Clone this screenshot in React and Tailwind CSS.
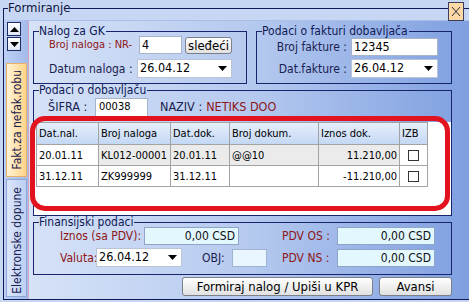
import React from 'react';

function Arrow({ up }) {
  return (
    <svg width="9" height="5" viewBox="0 0 9 5">
      <path d={up ? 'M0 5h9L4.5 0z' : 'M0 0h9L4.5 5z'} fill="#000" />
    </svg>
  );
}

function Group({ title, className = '', children }) {
  return (
    <fieldset className={`border border-[#18246e] ${className}`}>
      <legend className="ml-[5px] pr-[1px] text-[12px] leading-[12px] text-[#0f1a55]">{title}</legend>
      {children}
    </fieldset>
  );
}

function Combo({ value, className = '' }) {
  return (
    <div className={`flex items-center bg-white border border-[#b9c4d6] ${className}`}>
      <span className="flex-1 pl-[2px] text-[12.5px] leading-none text-black">{value}</span>
      <span className="w-[18px] flex justify-center"><Arrow /></span>
    </div>
  );
}

function Input({ value, className = '' }) {
  return (
    <div className={`flex items-center bg-white border border-[#a7b3c6] pl-[2px] text-[12.5px] leading-none text-black ${className}`}>
      {value}
    </div>
  );
}

function Money({ value, className = '' }) {
  return (
    <div className={`flex items-center justify-end bg-[#e2f8fe] border border-[#8fa5c8] pr-[3px] text-[12px] leading-none text-[#111] ${className}`}>
      {value}
    </div>
  );
}

function Btn({ children, className = '' }) {
  return (
    <div className={`flex items-center justify-center rounded-[3px] border border-[#7c8089] bg-gradient-to-b from-white to-[#e1e1e1] text-[13px] leading-none text-black ${className}`}>
      {children}
    </div>
  );
}

const COLS = ['Dat.nal.', 'Broj naloga', 'Dat.dok.', 'Broj dokum.', 'Iznos dok.', 'IZB'];

const ROWS = [
  { dn: '20.01.11', bn: 'KL012-00001', dd: '20.01.11', bd: '@@10', iz: '11.210,00', sel: true },
  { dn: '31.12.11', bn: 'ZK999999', dd: '31.12.11', bd: '', iz: '-11.210,00', sel: false },
];

function Grid() {
  const cell = 'border-r border-b border-[#a3a3a3] flex items-center px-[2px] text-[11px] leading-none text-black';
  return (
    <div className="ml-[2px] mt-[1px] grid grid-cols-[62px_72px_59px_89px_81px_28px] w-max border-l border-t border-[#a3a3a3]">
      {COLS.map((c) => (
        <div key={c} className={`${cell} h-[22px] bg-gradient-to-b from-[#e6effb] to-[#c4d8f4] text-[#15204a]`}>{c}</div>
      ))}
      {ROWS.map((r) => (
        <React.Fragment key={r.dn}>
          <div className={`${cell} h-[21px] bg-white`}>{r.dn}</div>
          <div className={`${cell} h-[21px] ${r.sel ? 'bg-[#ebebeb]' : 'bg-white'}`}>{r.bn}</div>
          <div className={`${cell} h-[21px] ${r.sel ? 'bg-[#ebebeb]' : 'bg-white'}`}>{r.dd}</div>
          <div className={`${cell} h-[21px] ${r.sel ? 'bg-[#ebebeb]' : 'bg-white'}`}>{r.bd}</div>
          <div className={`${cell} h-[21px] justify-end ${r.sel ? 'bg-[#ebebeb]' : 'bg-white'}`}>{r.iz}</div>
          <div className={`${cell} h-[21px] justify-center bg-white`}>
            <span className="w-[11px] h-[11px] border border-[#333] bg-white" />
          </div>
        </React.Fragment>
      ))}
    </div>
  );
}

export default function App() {
  return (
    <div className="relative w-[469px] h-[302px] overflow-hidden bg-[#c7d6f2] font-['DejaVu_Sans_Condensed','DejaVu_Sans',sans-serif] text-[#16204f]">
      <fieldset className="ml-[3px] mt-[1px] h-[299px] border-l border-t border-b border-[#101a58] flex flex-col">
        <legend className="ml-[4px] text-[13px] leading-[14px] text-[#0c1440]">Formiranje</legend>
        <div className="mt-[5px] flex flex-1 min-h-0">
          {/* tabs */}
          <div className="w-[24px] flex flex-col bg-gradient-to-r from-[#bcd0f3] to-[#a4bbea]">
            <div className="ml-[3px] mt-[2px] w-[14px] h-[14px] flex items-center justify-center border border-[#1d2a63] bg-gradient-to-b from-white to-[#dfe6f4]">
              <Arrow up />
            </div>
            <div className="ml-[3px] mt-[1px] w-[14px] h-[14px] flex items-center justify-center border border-[#1d2a63] bg-gradient-to-b from-white to-[#dfe6f4]">
              <Arrow />
            </div>
            <div className="ml-[2px] mt-[12px] w-[21px] h-[114px] flex items-center justify-center border border-[#e7b36a] bg-gradient-to-r from-[#fff3d4] to-[#ffd48a]">
              <span className="[writing-mode:vertical-rl] rotate-180 text-[12px] leading-none text-[#1b2250] whitespace-nowrap">Fakt.za nefak.robu</span>
            </div>
            <div className="ml-[2px] mt-[2px] mb-[2px] w-[21px] flex-1 flex items-end justify-center overflow-hidden border border-[#8fa6d6] bg-gradient-to-r from-[#dce6fa] to-[#bccff3]">
              <span className="mb-[2px] [writing-mode:vertical-rl] rotate-180 text-[12px] leading-none text-[#1b2250] whitespace-nowrap">Elektronske dopune</span>
            </div>
          </div>

          {/* main page */}
          <div className="flex-1 flex flex-col border-l border-l-[#d6a4bd] border-t border-t-[#a9bfea] bg-gradient-to-r from-[#d6e2f7] via-[#b6caef] to-[#7f9fe0] pl-[4px] pr-[17px]">
            <div className="mt-[4px] flex items-start">
              <Group title="Nalog za GK" className="w-[214px] h-[59px]">
                <div className="-mt-[1px] pl-[15px] flex items-center">
                  <span className="w-[90px] text-[11px] text-[#8d1616] whitespace-nowrap">Broj naloga : NR-</span>
                  <Input value="4" className="w-[43px] h-[18px]" />
                  <Btn className="ml-[3px] w-[47px] h-[17px]">sleđeći</Btn>
                </div>
                <div className="mt-[5px] pl-[15px] flex items-center">
                  <span className="w-[88px] text-[12px] text-[#1a2150] whitespace-nowrap">Datum naloga :</span>
                  <Combo value="26.04.12" className="w-[95px] h-[19px]" />
                </div>
              </Group>
              <Group title="Podaci o fakturi dobavljača" className="ml-[9px] w-[196px] h-[59px]">
                <div className="mt-[1px] flex items-center">
                  <span className="w-[91px] pr-[1px] text-right text-[12px] text-[#1a2150] whitespace-nowrap">Broj fakture :</span>
                  <Input value="12345" className="ml-[3px] w-[87px] h-[18px]" />
                </div>
                <div className="mt-[3px] flex items-center">
                  <span className="w-[91px] pr-[1px] text-right text-[12px] text-[#1a2150] whitespace-nowrap">Dat.fakture :</span>
                  <Combo value="26.04.12" className="ml-[3px] w-[87px] h-[19px]" />
                </div>
              </Group>
            </div>

            <Group title="Podaci o dobavljaču" className="h-[132px]">
              <div className="mt-[2px] pl-[14px] flex items-center">
                <span className="w-[47px] text-[12.5px] text-[#1a2150] whitespace-nowrap">ŠIFRA :</span>
                <div className="w-[53px] h-[19px] bg-white border border-[#a7b3c6] pl-[3px] pt-[2px] text-[11px] leading-none text-black">00038</div>
                <span className="ml-[12px] text-[12.5px] text-[#1a2150] whitespace-nowrap">NAZIV :</span>
                <span className="ml-[4px] text-[12.5px] text-[#8d1616] whitespace-nowrap">NETIKS DOO</span>
              </div>
              <div className="mt-[5px] h-[93px] bg-white">
                <Grid />
              </div>
            </Group>

            <Group title="Finansijski podaci" className="h-[59px]">
              <div className="-mt-[1px] pl-[26px] flex items-center">
                <span className="w-[84px] text-[12px] text-[#8d1616] whitespace-nowrap">Iznos (sa PDV):</span>
                <Money value="0,00 CSD" className="w-[95px] h-[18px]" />
                <span className="ml-[43px] w-[55px] text-[12px] text-[#8d1616] whitespace-nowrap">PDV OS :</span>
                <Money value="0,00 CSD" className="w-[98px] h-[18px]" />
              </div>
              <div className="mt-[3px] pl-[26px] flex items-center">
                <span className="w-[36px] text-[12px] text-[#8d1616] whitespace-nowrap">Valuta:</span>
                <Combo value="26.04.12" className="w-[86px] h-[19px]" />
                <span className="ml-[20px] w-[30px] text-[12px] text-[#1a2150] whitespace-nowrap">OBJ:</span>
                <div className="w-[35px] h-[18px] bg-[#eaf6ff] border border-[#9fb3d3]" />
                <span className="ml-[15px] w-[55px] text-[12px] text-[#8d1616] whitespace-nowrap">PDV NS :</span>
                <Money value="0,00 CSD" className="w-[98px] h-[18px]" />
              </div>
            </Group>

            <div className="mt-[2px] flex justify-end">
              <Btn className="w-[191px] h-[19px]">Formiraj nalog / Upiši u KPR</Btn>
              <Btn className="ml-[6px] w-[73px] h-[19px]">Avansi</Btn>
            </div>
          </div>
        </div>
      </fieldset>

      {/* close button */}
      <div className="absolute left-[448px] top-[2px] w-[16px] h-[19px] flex items-center justify-center bg-[#fdd9a5] border border-[#3b3f5f]">
        <svg width="10" height="11" viewBox="0 0 10 11">
          <path d="M1 1l8 9M9 1l-8 9" stroke="#2a2a3a" strokeWidth="1" fill="none" />
        </svg>
      </div>

      {/* red highlight */}
      <div className="absolute left-[30px] top-[116px] w-[420px] h-[95px] border-[5px] border-[#e2121f] rounded-[15px]" />
    </div>
  );
}
